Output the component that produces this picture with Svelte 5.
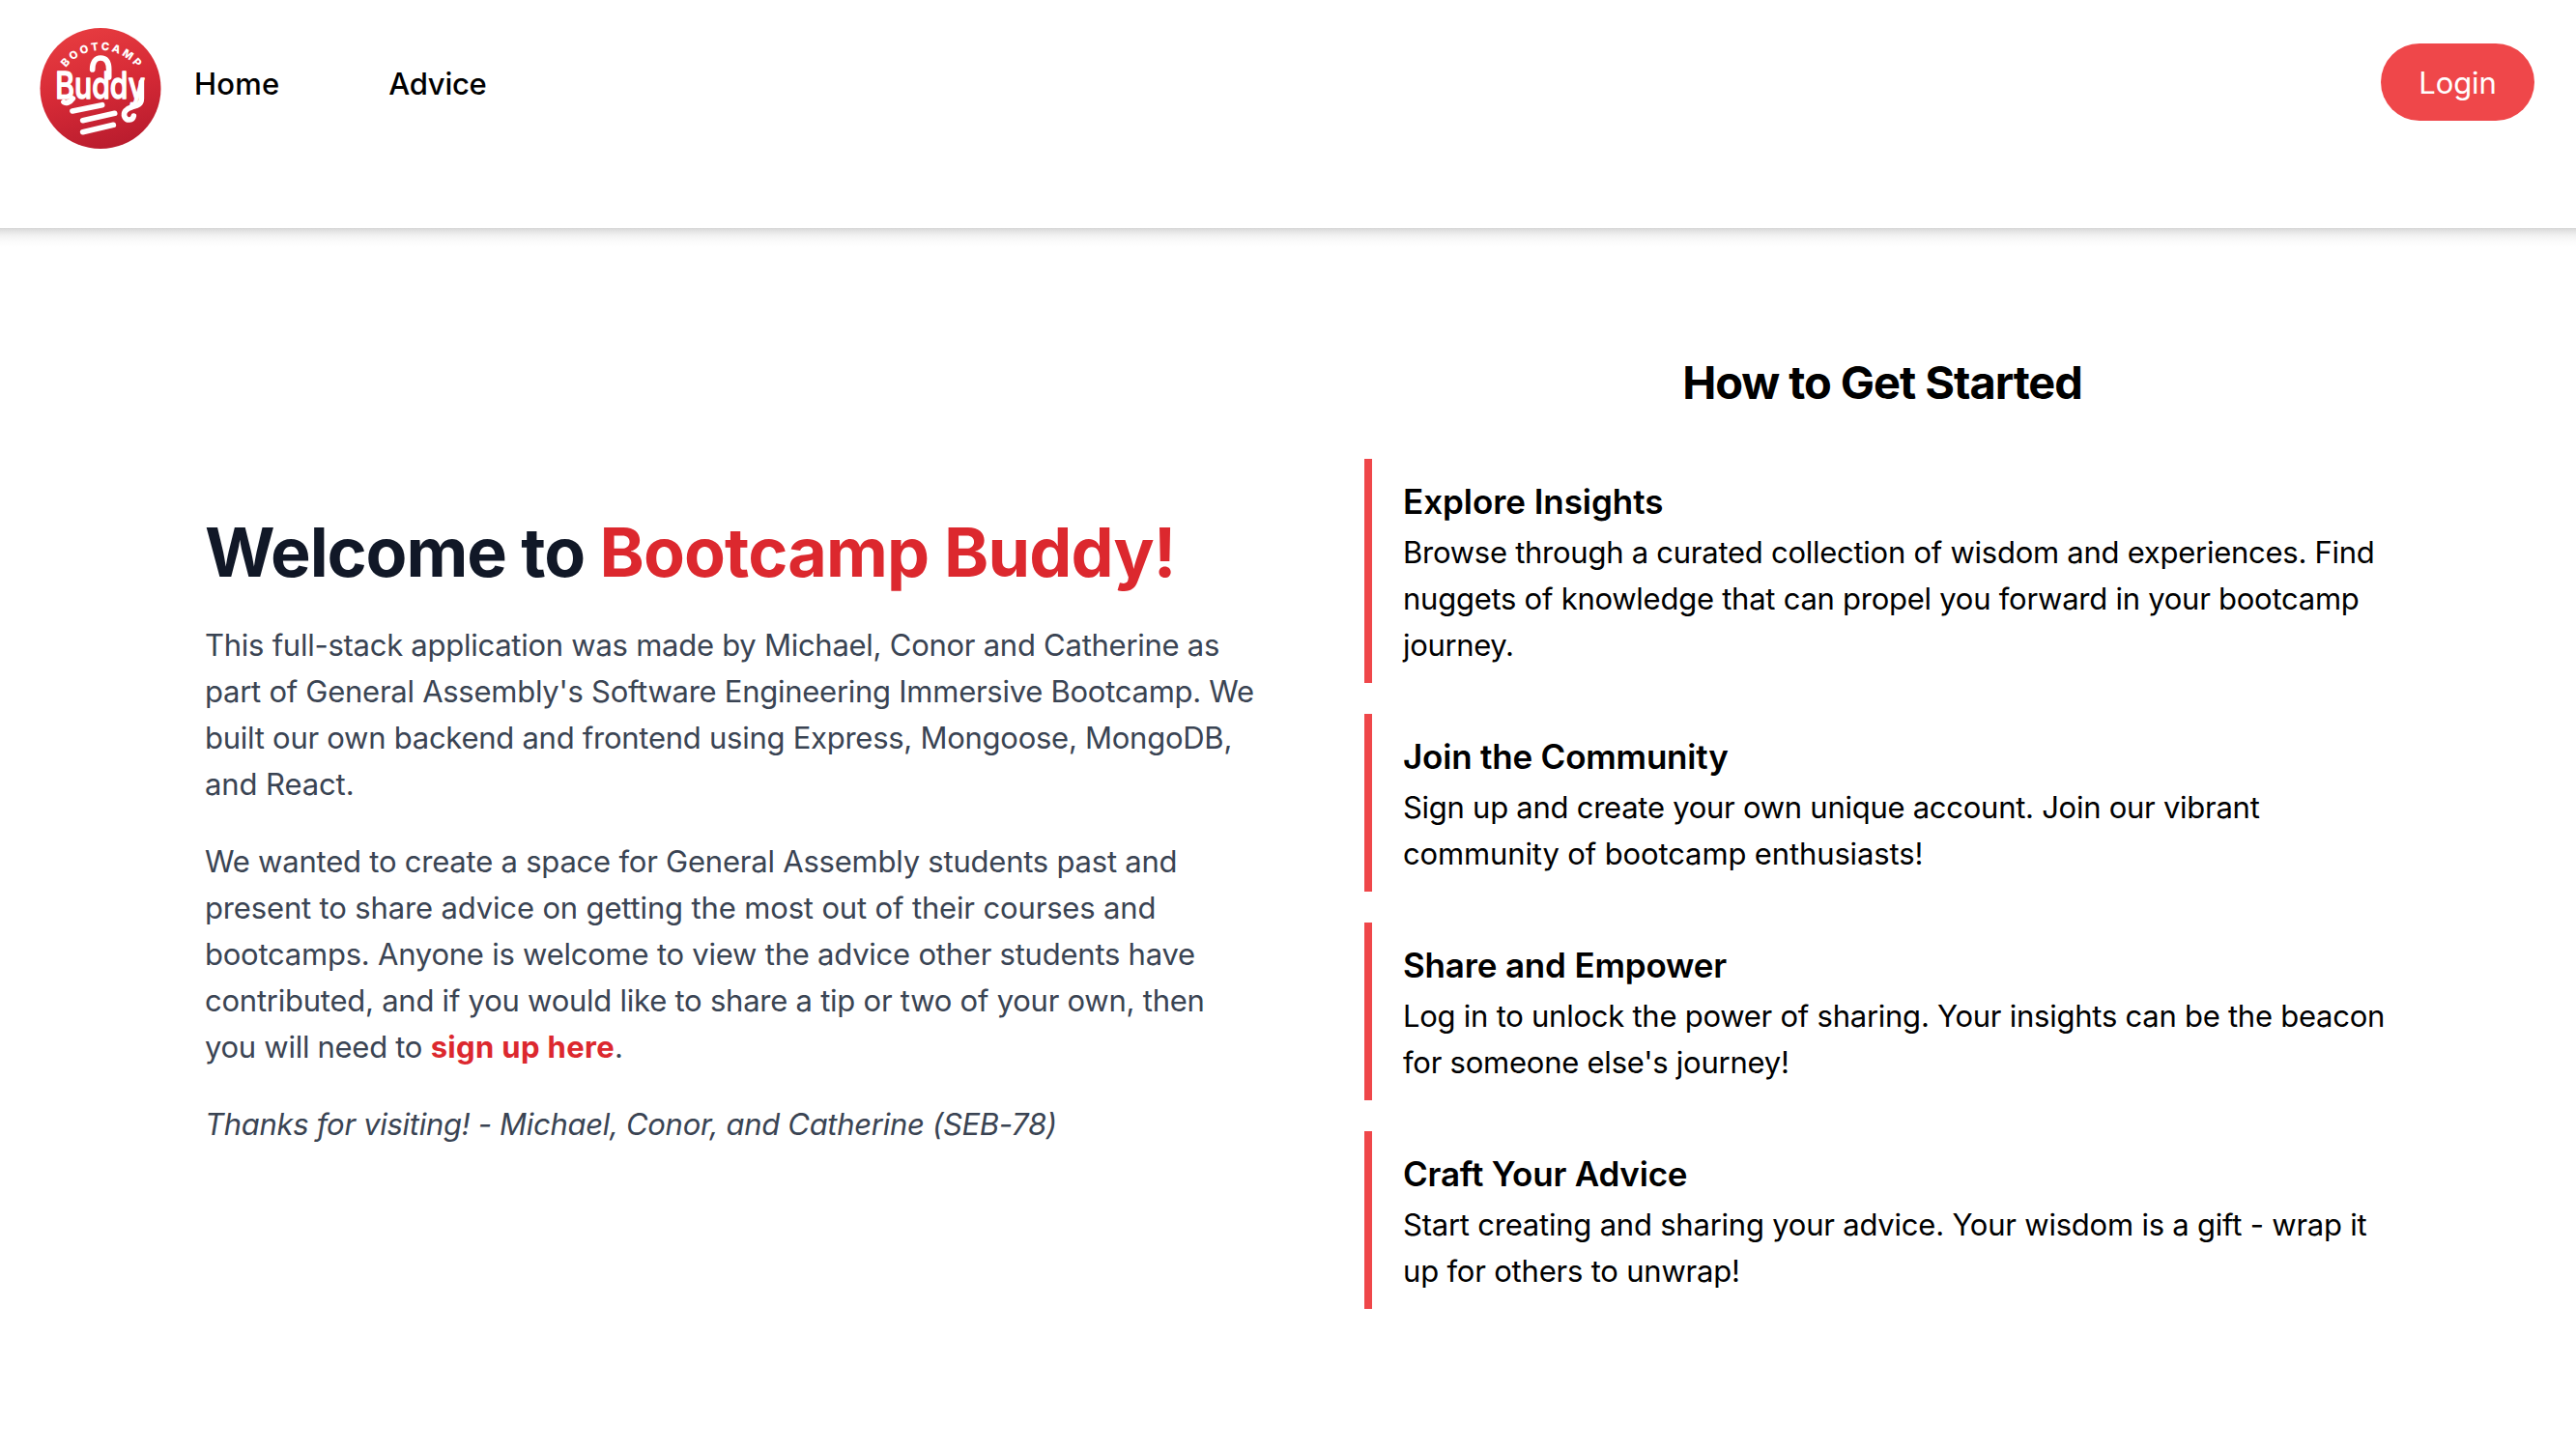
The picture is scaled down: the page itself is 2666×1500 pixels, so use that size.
<script>
  const intro = [
    {
      lines: [
        ['This full-stack application was made by Michael, Conor and Catherine as', -0.26],
        ["part of General Assembly's Software Engineering Immersive Bootcamp. We", -0.265],
        ['built our own backend and frontend using Express, Mongoose, MongoDB,', -0.26],
        ['and React.', -0.1]
      ]
    },
    {
      lines: [
        ['We wanted to create a space for General Assembly students past and', -0.22],
        ['present to share advice on getting the most out of their courses and', -0.15],
        ['bootcamps. Anyone is welcome to view the advice other students have', -0.23],
        ['contributed, and if you would like to share a tip or two of your own, then', -0.24]
      ],
      signup: true
    }
  ];

  const steps = [
    {
      title: ['Explore Insights', -0.05],
      lines: [
        ['Browse through a curated collection of wisdom and experiences. Find', -0.26],
        ['nuggets of knowledge that can propel you forward in your bootcamp', -0.255],
        ['journey.', -0.35]
      ]
    },
    {
      title: ['Join the Community', -0.2],
      lines: [
        ['Sign up and create your own unique account. Join our vibrant', -0.265],
        ['community of bootcamp enthusiasts!', -0.13]
      ]
    },
    {
      title: ['Share and Empower', -0.17],
      lines: [
        ['Log in to unlock the power of sharing. Your insights can be the beacon', -0.25],
        ["for someone else's journey!", -0.24]
      ]
    },
    {
      title: ['Craft Your Advice', -0.2],
      lines: [
        ['Start creating and sharing your advice. Your wisdom is a gift - wrap it', -0.22],
        ['up for others to unwrap!', -0.2]
      ]
    }
  ];
</script>

<header class="navbar">
  <svg class="logo" viewBox="33 27 378 375" role="img" aria-label="Bootcamp Buddy">
    <defs>
      <linearGradient id="disc" x1="0.3" y1="0" x2="0.6" y2="1">
        <stop offset="0" stop-color="#e73c40" />
        <stop offset="0.5" stop-color="#d62a36" />
        <stop offset="1" stop-color="#b91c2e" />
      </linearGradient>
      <path id="arc" d="M 86 234 A 138 138 0 0 1 362 234" />
    </defs>
    <circle cx="222" cy="214.5" r="187.5" fill="url(#disc)" />
    <text class="arc-text" text-anchor="middle">
      <textPath href="#arc" startOffset="50%" textLength="254" lengthAdjust="spacing">BOOTCAMP</textPath>
    </text>
    <text class="script" x="82" y="247" textLength="278" lengthAdjust="spacingAndGlyphs">Buddy</text>
    <g class="swash">
      <path d="M197 156 C197 132 208 120 222 120 C240 120 248 134 248 156 V180" />
      <path d="M108 257 C114 262 128 258 136 246" />
      <path d="M349 195 V246 C349 266 334 268 320 272 C302 277 291 290 297 303 C303 316 322 315 325 300" />
      <path d="M135 285 L227 266" />
      <path d="M167 314 L266 292" />
      <path d="M167 350 L262 328" />
    </g>
  </svg>
  <nav class="links">
    <a class="home" href="#home">Home</a>
    <a class="advice" href="#advice">Advice</a>
  </nav>
  <button class="login" type="button">Login</button>
</header>

<main class="content">
  <section class="intro">
    <h1><span class="lead">Welcome to{' '}</span><span class="brand">Bootcamp Buddy!</span></h1>
    {#each intro as para}
      <p>
        {#each para.lines as [text, track]}
          <span class="line" style:letter-spacing="{track}px">{text}</span>
        {/each}
        {#if para.signup}
          <span class="line"><span class="before-link">you will need to{' '}</span><a class="signup" href="#signup">sign up here</a>.</span>
        {/if}
      </p>
    {/each}
    <p class="thanks">Thanks for visiting! - Michael, Conor, and Catherine (SEB-78)</p>
  </section>

  <section class="guide">
    <h2>How to Get Started</h2>
    <ol class="steps">
      {#each steps as step}
        <li>
          <h3 style:letter-spacing="{step.title[1]}px">{step.title[0]}</h3>
          {#each step.lines as [text, track]}
            <span class="line" style:letter-spacing="{track}px">{text}</span>
          {/each}
        </li>
      {/each}
    </ol>
  </section>
</main>

<style>
  :global(body) {
    background: #fff;
    font-family: Inter, 'Liberation Sans', sans-serif;
    font-size: 31px;
    line-height: 48px;
    color: #000;
  }

  h1, h2, h3, p, ol { margin: 0; padding: 0; }
  a { color: inherit; text-decoration: none; }

  .navbar {
    box-sizing: border-box;
    height: 236px;
    padding: 29px 43px 0 41px;
    display: flex;
    align-items: flex-start;
    background: #fff;
  }

  .logo { width: 126px; height: 125px; flex: none; overflow: visible; }
  .arc-text { font: 800 34px Inter, sans-serif; fill: #fff; }
  .script {
    font: 500 114px Inter, sans-serif;
    fill: #fff;
    stroke: #fff;
    stroke-width: 4;
    stroke-linejoin: round;
  }
  .swash { fill: none; stroke: #fff; stroke-width: 17; stroke-linecap: round; stroke-linejoin: round; }

  .links {
    display: flex;
    gap: 113px;
    margin-left: 34px;
    padding-top: 34px;
    font-weight: 500;
  }
  .home { letter-spacing: 0.2px; }
  .advice { letter-spacing: -0.3px; }

  .login {
    box-sizing: border-box;
    width: 159px;
    height: 80px;
    margin: 16px 0 0 auto;
    padding: 1px 0 0;
    border: 0;
    border-radius: 40px;
    background: #ef474a;
    color: #fff;
    font: inherit;
    letter-spacing: -0.1px;
  }

  /* The header's shadow runs edge to edge along the top of the content. */
  .content {
    display: grid;
    grid-template-columns: 1104px 1072px;
    column-gap: 96px;
    align-items: center;
    padding: 128px 182px 142px 212px;
    background: linear-gradient(#d7d7d7 0, #e6e6e6 4px, #f2f2f2 8px, #fafafa 13px, #fff 20px);
  }

  h1 {
    font-size: 70px;
    line-height: 80px;
    font-weight: 700;
    color: #111827;
    white-space: pre;
  }
  .lead { letter-spacing: -1.1px; }
  .brand { color: #dc282e; letter-spacing: -0.85px; }

  .intro p { margin-top: 32px; color: #3a4453; }
  .line { display: block; white-space: pre; }
  .before-link { letter-spacing: -0.28px; }
  .intro .signup { color: #dc282e; font-weight: 700; letter-spacing: 0.35px; }
  .intro .thanks { font-style: italic; letter-spacing: -0.3px; white-space: nowrap; }

  h2 {
    font-size: 47px;
    line-height: 64px;
    font-weight: 700;
    letter-spacing: -1.05px;
    text-align: center;
  }

  .steps {
    list-style: none;
    display: flex;
    flex-direction: column;
    gap: 32px;
    margin-top: 47px;
  }
  .steps li { border-left: 8px solid #ef474a; padding: 17px 0 15px 32px; }
  h3 { font-size: 35px; line-height: 55px; font-weight: 600; padding-bottom: 1px; }
</style>
